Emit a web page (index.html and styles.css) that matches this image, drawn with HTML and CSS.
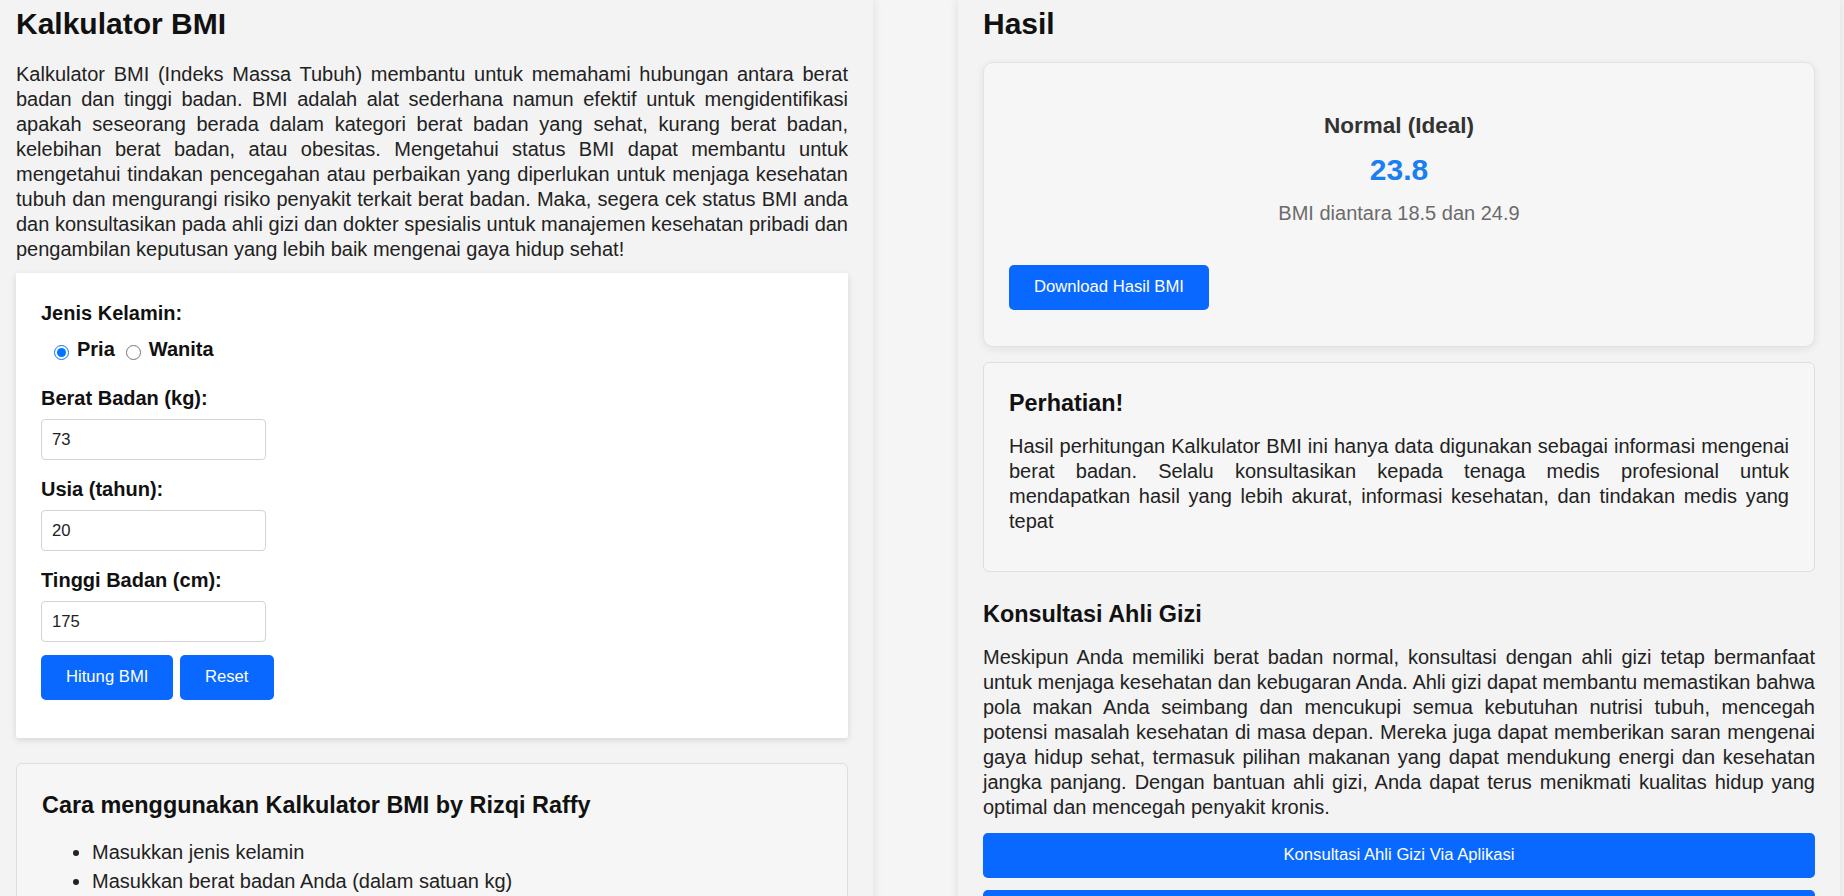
FILE: index.html
```html
<!DOCTYPE html>
<html lang="id">
<head>
<meta charset="utf-8">
<title>Kalkulator BMI</title>
<link rel="stylesheet" href="styles.css">
</head>
<body>
<div class="page">
  <section class="col">
    <h1 class="title">Kalkulator BMI</h1>
    <p class="intro">Kalkulator BMI (Indeks Massa Tubuh) membantu untuk memahami hubungan antara berat badan dan tinggi badan. BMI adalah alat sederhana namun efektif untuk mengidentifikasi apakah seseorang berada dalam kategori berat badan yang sehat, kurang berat badan, kelebihan berat badan, atau obesitas. Mengetahui status BMI dapat membantu untuk mengetahui tindakan pencegahan atau perbaikan yang diperlukan untuk menjaga kesehatan tubuh dan mengurangi risiko penyakit terkait berat badan. Maka, segera cek status BMI anda dan konsultasikan pada ahli gizi dan dokter spesialis untuk manajemen kesehatan pribadi dan pengambilan keputusan yang lebih baik mengenai gaya hidup sehat!</p>

    <form class="calc-card">
      <div class="field-label first">Jenis Kelamin:</div>
      <div class="radios">
        <input class="radio" type="radio" name="jk" id="pria" checked>
        <label class="radio-text" for="pria">Pria</label>
        <input class="radio radio-second" type="radio" name="jk" id="wanita">
        <label class="radio-text" for="wanita">Wanita</label>
      </div>

      <label class="field-label after-radios" for="berat">Berat Badan (kg):</label>
      <input class="text-input" id="berat" type="text" value="73">

      <label class="field-label" for="usia">Usia (tahun):</label>
      <input class="text-input" id="usia" type="text" value="20">

      <label class="field-label" for="tinggi">Tinggi Badan (cm):</label>
      <input class="text-input" id="tinggi" type="text" value="175">

      <div class="actions">
        <button type="button" class="btn">Hitung BMI</button>
        <button type="button" class="btn">Reset</button>
      </div>
    </form>

    <div class="info-card">
      <h3 class="card-title">Cara menggunakan Kalkulator BMI by Rizqi Raffy</h3>
      <ul class="steps">
        <li>Masukkan jenis kelamin</li>
        <li>Masukkan berat badan Anda (dalam satuan kg)</li>
        <li>Masukkan usia Anda (dalam satuan tahun)</li>
        <li>Masukkan tinggi badan Anda (dalam satuan cm)</li>
        <li>Klik tombol Hitung BMI</li>
      </ul>
    </div>
  </section>

  <section class="col">
    <h1 class="title">Hasil</h1>

    <div class="result-card">
      <div class="result-box">
        <h2 class="result-cat">Normal (Ideal)</h2>
        <div class="result-value">23.8</div>
        <div class="result-range">BMI diantara 18.5 dan 24.9</div>
      </div>
      <button type="button" class="btn btn-download">Download Hasil BMI</button>
    </div>

    <div class="info-card warn-card">
      <h3 class="card-title">Perhatian!</h3>
      <p class="card-text">Hasil perhitungan Kalkulator BMI ini hanya data digunakan sebagai informasi mengenai berat badan. Selalu konsultasikan kepada tenaga medis profesional untuk mendapatkan hasil yang lebih akurat, informasi kesehatan, dan tindakan medis yang tepat</p>
    </div>

    <h3 class="section-title">Konsultasi Ahli Gizi</h3>
    <p class="section-text">Meskipun Anda memiliki berat badan normal, konsultasi dengan ahli gizi tetap bermanfaat untuk menjaga kesehatan dan kebugaran Anda. Ahli gizi dapat membantu memastikan bahwa pola makan Anda seimbang dan mencukupi semua kebutuhan nutrisi tubuh, mencegah potensi masalah kesehatan di masa depan. Mereka juga dapat memberikan saran mengenai gaya hidup sehat, termasuk pilihan makanan yang dapat mendukung energi dan kesehatan jangka panjang. Dengan bantuan ahli gizi, Anda dapat terus menikmati kualitas hidup yang optimal dan mencegah penyakit kronis.</p>
    <button type="button" class="btn btn-block">Konsultasi Ahli Gizi Via Aplikasi</button>
    <button type="button" class="btn btn-block btn-next">Konsultasi Ahli Gizi Via Website</button>
  </section>
</div>
</body>
</html>
```

FILE: styles.css
```css
html, body {
  margin: 0;
  padding: 0;
}

body {
  background: #f5f5f5;
  font-family: "Liberation Sans", Arial, sans-serif;
  color: #222;
  overflow: hidden;
}

.page {
  display: flex;
  gap: 85px;
  margin-left: -9px;
  min-height: 100vh;
}

.col {
  width: 882px;
  flex: 0 0 882px;
  box-sizing: border-box;
  padding: 0 25px 40px;
  background: #f3f3f3;
  box-shadow: 0 0 10px rgba(0, 0, 0, 0.1);
}

.title {
  font-size: 30px;
  font-weight: bold;
  color: #111;
  line-height: 34.5px;
  margin: 7px 0 20.5px;
}

.intro {
  font-size: 20px;
  line-height: 25px;
  text-align: justify;
  color: #222;
  margin: 0 0 11px;
}

/* form card */
.calc-card {
  background: #fff;
  padding: 28.6px 25px 38px;
  box-shadow: 0 2px 6px rgba(0, 0, 0, 0.12);
  border-radius: 2px;
}

.field-label {
  display: block;
  font-size: 20px;
  font-weight: bold;
  line-height: 23px;
  color: #111;
  margin: 18px 0 8.5px;
}

.field-label.first {
  margin: 0;
}

.field-label.after-radios {
  margin-top: 26px;
  margin-bottom: 9.4px;
}

.radios {
  display: flex;
  align-items: center;
  margin-top: 13px;
  height: 23px;
}

.radio {
  width: 15px;
  height: 15px;
  margin: 7px 8px 0 13px;
  accent-color: #0075ff;
}

.radio-second {
  margin-left: 11px;
}

.radio-text {
  font-size: 20px;
  font-weight: bold;
  line-height: 23px;
  color: #111;
}

.text-input {
  display: block;
  box-sizing: border-box;
  width: 225px;
  height: 41.5px;
  padding: 0 10px;
  border: 1px solid #d3d3d3;
  border-radius: 4px;
  background: #fff;
  font-family: "Liberation Sans", Arial, sans-serif;
  font-size: 16.67px;
  color: #222;
}

.actions {
  display: flex;
  gap: 6.6px;
  margin-top: 12.5px;
}

.btn {
  height: 45px;
  padding: 0 25px;
  border: none;
  border-radius: 5px;
  background: #0868ff;
  color: #fff;
  font-family: "Liberation Sans", Arial, sans-serif;
  font-size: 16.67px;
  cursor: pointer;
}

/* info cards */
.info-card {
  background: #f6f6f6;
  border: 1px solid #dedede;
  border-radius: 6px;
  padding: 28.4px 25px 30px;
  margin-top: 25px;
}

.card-title {
  font-size: 23.4px;
  font-weight: bold;
  line-height: 26.9px;
  color: #111;
  margin: 0;
}

.steps {
  margin: 22px 0 0;
  padding-left: 50px;
  font-size: 20px;
  line-height: 23px;
  color: #222;
}

.steps li {
  margin-bottom: 6px;
}

/* result */
.result-card {
  background: #f6f6f6;
  border: 1px solid #e3e3e3;
  border-radius: 10px;
  box-shadow: 0 2px 8px rgba(0, 0, 0, 0.08);
  padding: 25px 25px 25px;
  height: 285px;
  box-sizing: border-box;
}

.result-box {
  text-align: center;
  padding-top: 24.5px;
}

.result-cat {
  font-size: 22.5px;
  font-weight: bold;
  line-height: 25.9px;
  color: #333;
  margin: 0;
}

.result-value {
  font-size: 30px;
  font-weight: bold;
  line-height: 34.5px;
  color: #1a7ff0;
  margin-top: 14.8px;
}

.result-range {
  font-size: 20px;
  line-height: 23px;
  color: #6b6b6b;
  margin-top: 14.6px;
}

.btn-download {
  margin-top: 39.7px;
}

.warn-card {
  margin-top: 15px;
  padding: 27px 25px 37px;
}

.card-text {
  font-size: 20px;
  line-height: 25px;
  text-align: justify;
  color: #222;
  margin: 17.3px 0 0;
}

.section-title {
  font-size: 23.4px;
  font-weight: bold;
  line-height: 26.9px;
  color: #111;
  margin: 28.4px 0 0;
}

.section-text {
  font-size: 20px;
  line-height: 25px;
  text-align: justify;
  color: #222;
  margin: 17.4px 0 0;
}

.btn-block {
  display: block;
  width: 100%;
  height: 44.5px;
  margin-top: 13.3px;
}

.btn-next {
  margin-top: 12.3px;
}
```
